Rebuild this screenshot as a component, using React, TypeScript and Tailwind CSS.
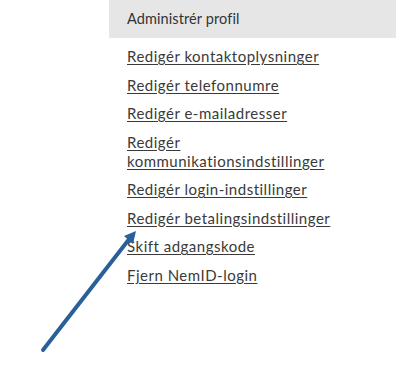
const links = [
  'Redigér kontaktoplysninger',
  'Redigér telefonnumre',
  'Redigér e-mailadresser',
  'Redigér kommunikationsindstillinger',
  'Redigér login-indstillinger',
  'Redigér betalingsindstillinger',
  'Skift adgangskode',
  'Fjern NemID-login',
];

export default function App() {
  return (
    <div className="relative w-[400px] h-[370px] bg-white overflow-hidden" style={{ fontFamily: 'Lato, "Noto Sans", sans-serif' }}>
      <div className="ml-[109px] w-[287px]">
        {/* Profile menu header */}
        <div className="h-[38px] bg-[#e6e6e6] pl-[18px] flex items-center text-[14.5px] tracking-[0.1px] text-[#333]">
          Administrér profil
        </div>

        {/* Menu links */}
        <ul className="pl-[18px] pr-[40px] pt-[9px] flex flex-col gap-[9.5px] text-[15px] tracking-[0.5px] leading-[19px] text-[#3a3a3a]">
          {links.map((l) => (
            <li key={l}>
              <a href="#" className="underline underline-offset-[2px] decoration-[#3a3a3a]">{l}</a>
            </li>
          ))}
        </ul>
      </div>

      {/* Annotation arrow */}
      <svg className="absolute inset-0 pointer-events-none" width="400" height="370" viewBox="0 0 400 370">
        <line x1="43" y1="350" x2="130" y2="238" stroke="#2a6099" strokeWidth="4" strokeLinecap="round" />
        <polygon points="136,231 124,236 133,244" fill="#2a6099" />
      </svg>
    </div>
  );
}
